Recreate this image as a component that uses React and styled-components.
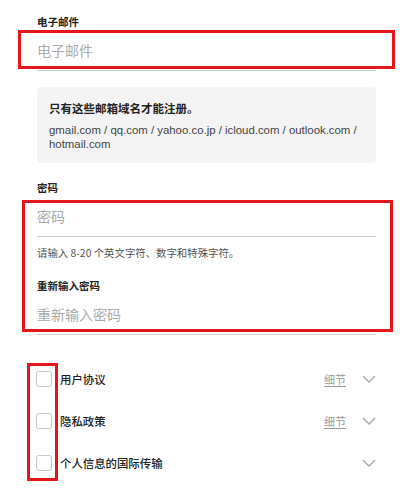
import styled, { createGlobalStyle } from "styled-components";

const GlobalStyle = createGlobalStyle`
  body {
    margin: 0;
    background: #ffffff;
    font-family: "Liberation Sans", "Noto Sans CJK SC", sans-serif;
    color: #222222;
  }
`;

const RED = "#e3161b";

const Page = styled.div`
  width: 339px;
  padding: 14px 24px 0 37px;
`;

const FieldLabel = styled.div`
  font-family: "Noto Sans CJK SC", sans-serif;
  font-size: 10.5px;
  font-weight: 700;
  line-height: 16px;
  margin-top: ${(p) => p.$top || 0}px;
`;

const InputWrap = styled.div`
  position: relative;
`;

const InputLine = styled.div`
  display: flex;
  align-items: center;
  height: 40px;
  border-bottom: 1px solid #cfcfcf;
  font-family: "Noto Sans CJK SC", sans-serif;
  font-size: 14px;
  color: #ababab;
`;

const Highlight = styled.div`
  position: absolute;
  box-sizing: border-box;
  border: 3px solid ${RED};
  pointer-events: none;
`;

const InfoBox = styled.div`
  margin-top: 16px;
  background: #f4f4f5;
  border-radius: 4px;
  padding: 12px;
`;

const InfoTitle = styled.div`
  font-family: "Noto Sans CJK SC", sans-serif;
  font-size: 11.5px;
  font-weight: 700;
  line-height: 18px;
`;

const InfoText = styled.div`
  margin-top: 6px;
  font-size: 11.4px;
  line-height: 14px;
  color: #444444;
`;

const Hint = styled.div`
  margin-top: 8px;
  font-family: "Noto Sans CJK SC", sans-serif;
  font-size: 10.4px;
  line-height: 16px;
  color: #555555;
`;

const Agreements = styled.div`
  position: relative;
  margin-top: 23px;
`;

const AgreeRow = styled.div`
  display: flex;
  align-items: center;
  height: 42px;
`;

const Checkbox = styled.span`
  box-sizing: border-box;
  width: 16px;
  height: 16px;
  margin-left: -1px;
  border: 1.5px solid #c6c6c6;
  border-radius: 3px;
  background: #ffffff;
`;

const AgreeLabel = styled.span`
  flex: 1;
  margin-left: 8px;
  font-family: "Noto Sans CJK SC", sans-serif;
  font-size: 11.4px;
  font-weight: 500;
  color: #222222;
`;

const DetailLink = styled.span`
  font-family: "Noto Sans CJK SC", sans-serif;
  font-size: 11px;
  color: #9a9a9a;
  text-decoration: underline;
  text-underline-offset: 2px;
  margin-right: 16px;
`;

const Chevron = () => (
  <svg width="14" height="8" viewBox="0 0 14 8">
    <polyline points="1,1 7,7 13,1" fill="none" stroke="#a5a5a5" strokeWidth="1.3" />
  </svg>
);

const agreements = [
  { label: "用户协议", detail: true },
  { label: "隐私政策", detail: true },
  { label: "个人信息的国际传输", detail: false },
];

export default function App() {
  return (
    <>
      <GlobalStyle />
      <Page>
        <FieldLabel>电子邮件</FieldLabel>
        <InputWrap>
          <InputLine>电子邮件</InputLine>
          <Highlight style={{ top: 0, left: -19, width: 377, height: 39 }} />
        </InputWrap>

        <InfoBox>
          <InfoTitle>只有这些邮箱域名才能注册。</InfoTitle>
          <InfoText>
            gmail.com / qq.com / yahoo.co.jp / icloud.com / outlook.com / hotmail.com
          </InfoText>
        </InfoBox>

        <FieldLabel $top={17}>密码</FieldLabel>
        <InputWrap>
          <InputLine>密码</InputLine>
          <Hint>请输入 8-20 个英文字符、数字和特殊字符。</Hint>
          <FieldLabel $top={17}>重新输入密码</FieldLabel>
          <InputLine>重新输入密码</InputLine>
          <Highlight style={{ top: 4, left: -15, width: 371, height: 132 }} />
        </InputWrap>

        <Agreements>
          {agreements.map((a) => (
            <AgreeRow key={a.label}>
              <Checkbox />
              <AgreeLabel>{a.label}</AgreeLabel>
              {a.detail && <DetailLink>细节</DetailLink>}
              <Chevron />
            </AgreeRow>
          ))}
          <Highlight style={{ top: 5, left: -10, width: 31, height: 118 }} />
        </Agreements>
      </Page>
    </>
  );
}
